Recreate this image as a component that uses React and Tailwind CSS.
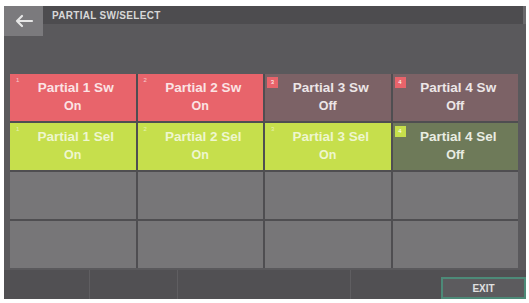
import React from "react";

const cells = [
  { label: "Partial 1 Sw", value: "On", bg: "bg-[#e8646b]", badge: null, text: "text-[#fbe3e4]" },
  { label: "Partial 2 Sw", value: "On", bg: "bg-[#e8646b]", badge: null, text: "text-[#fbe3e4]" },
  { label: "Partial 3 Sw", value: "Off", bg: "bg-[#7c6266]", badge: "bg-[#e8646b]", text: "text-[#ece6e7]" },
  { label: "Partial 4 Sw", value: "Off", bg: "bg-[#7c6266]", badge: "bg-[#e8646b]", text: "text-[#ece6e7]" },
  { label: "Partial 1 Sel", value: "On", bg: "bg-[#c6df4c]", badge: null, text: "text-[#eef6cf]" },
  { label: "Partial 2 Sel", value: "On", bg: "bg-[#c6df4c]", badge: null, text: "text-[#eef6cf]" },
  { label: "Partial 3 Sel", value: "On", bg: "bg-[#c6df4c]", badge: null, text: "text-[#eef6cf]" },
  { label: "Partial 4 Sel", value: "Off", bg: "bg-[#6e7a59]", badge: "bg-[#c6df4c]", text: "text-[#e9ece2]" },
];

function Cell({ cell, n }) {
  return (
    <div className={`relative h-[47px] ${cell.bg} flex flex-col items-center pt-[5px] ${cell.text}`}>
      {cell.badge ? (
        <div className={`absolute left-[2px] top-[3px] w-[11px] h-[11px] ${cell.badge} flex items-center justify-center text-[6px] text-white`}>
          {n}
        </div>
      ) : (
        <div className="absolute left-[6px] top-[2px] text-[6px] opacity-80">{n}</div>
      )}
      <div className="text-[13.5px] font-semibold leading-[17px] pl-[6px]">{cell.label}</div>
      <div className="text-[12.5px] font-semibold leading-[16px] mt-[2px]">{cell.value}</div>
    </div>
  );
}

export default function App() {
  return (
    <div className="w-[529px] h-[303px] bg-white pt-[6px] pl-[4px]" style={{ fontFamily: "'Liberation Sans', Arial, sans-serif" }}>
      <div className="w-[522px] h-[293px] bg-[#5a595c] flex flex-col">
        <div className="flex h-[30px]">
          <div className="w-[39px] h-[30px] bg-[#7b7a7d] flex items-center justify-center">
            <svg width="20" height="14" viewBox="0 0 20 14" fill="none" stroke="#e6e6e6" strokeWidth="2.2" strokeLinecap="round" strokeLinejoin="round">
              <path d="M18 7H3M8 2L3 7l5 5" />
            </svg>
          </div>
          <div className="flex-1 h-[18px] bg-[#4d4c4f] flex items-center pl-[9px] border-r-[3px] border-[#6a696c]">
            <span className="text-[10px] font-bold text-[#d8d8d8] tracking-[0.3px]">PARTIAL SW/SELECT</span>
          </div>
        </div>
        <div className="mt-[38px] ml-[6px] w-[508px] grid grid-cols-4 gap-[2px] bg-[#4f4e51]">
          {cells.map((c, i) => (
            <Cell key={i} cell={c} n={(i % 4) + 1} />
          ))}
          {Array.from({ length: 8 }).map((_, i) => (
            <div key={"e" + i} className="h-[47px] bg-[#777678]" />
          ))}
        </div>
        <div className="mt-auto h-[29px] bg-[#515053] flex items-end">
          <div className="w-[86px] h-full border-r border-[#5f5e61]" />
          <div className="w-[88px] h-full border-r border-[#5f5e61]" />
          <div className="w-[173px] h-full border-r border-[#5f5e61]" />
          <div className="flex-1 h-full flex items-end justify-end">
            <div className="w-[85px] h-[22px] border-2 border-[#4d8a78] bg-[#5c5b5e] flex items-center justify-center">
              <span className="text-[10px] font-bold text-[#e0e0e0]">EXIT</span>
            </div>
          </div>
        </div>
      </div>
    </div>
  );
}
